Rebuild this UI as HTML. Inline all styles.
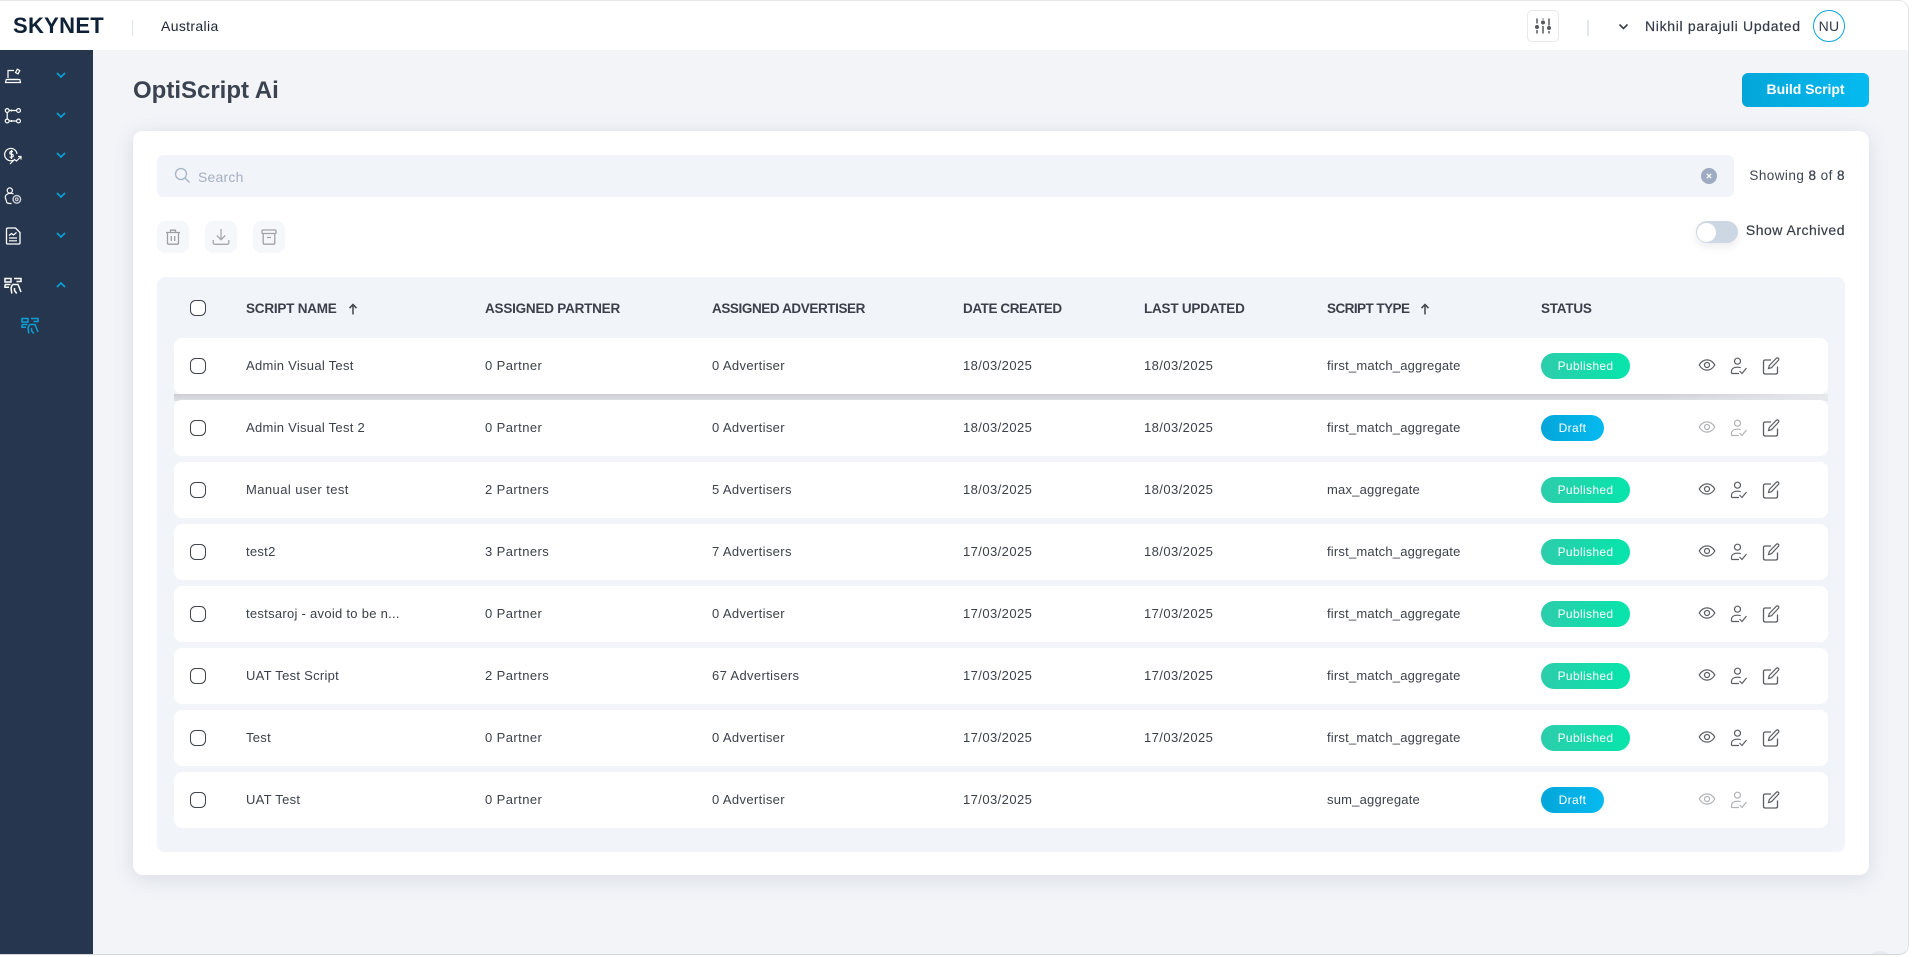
<!DOCTYPE html>
<html lang="en"><head><meta charset="utf-8"><title>OptiScript Ai</title>
<style>
html,body{margin:0;padding:0;width:1912px;height:957px;overflow:hidden;background:#fff}
*{box-sizing:border-box}
body{font-family:"Liberation Sans",sans-serif;color:#3a3f4a;position:relative}
.a{position:absolute}
.t{position:absolute;white-space:nowrap;line-height:18px;height:18px}
#win{position:absolute;left:0;top:0;width:1909px;height:955px;background:#f2f4f8;border-top:1px solid #e6e6e6;border-bottom:1px solid #d4d6d9;border-right:1px solid #dfe1e4;border-radius:0 10px 10px 0;overflow:hidden}
.row{position:absolute;left:174px;width:1654px;height:56px;background:#fff;border-radius:8px}
.row .t{top:19px;font-size:13px;letter-spacing:.42px;color:#3c404a}
.row span[style*="left:72px"]{letter-spacing:.28px}
.row span[style*="left:1153px"]{letter-spacing:.2px}
.row span[style*="left:538px"]{letter-spacing:.36px}
.cb{position:absolute;width:16px;height:16px;border:1.3px solid #3f4349;border-radius:5.5px;background:#fff}
.row .cb{left:16px;top:20px}
.th{position:absolute;top:299px;white-space:nowrap;line-height:18px;font-size:13.5px;font-weight:700;color:#3a3f4a;letter-spacing:-.22px}
.pill{position:absolute;left:1367px;top:15px;height:26px;border-radius:13px;color:#fff;font-size:12px;line-height:26px;text-align:center;letter-spacing:.35px}
.pub{width:89px;background:linear-gradient(90deg,#2ccdab,#06e5ab)}
.dr{width:63px;background:linear-gradient(90deg,#04a6d9,#05baf0)}
.ic{position:absolute;fill:none;stroke:#5a5d62;stroke-width:1.2}
.dim{stroke:#b0b2b5}
.side{position:absolute;fill:none;stroke:#fff;stroke-width:1.2}
.chev{position:absolute;left:55px;width:12px;height:8px;fill:none;stroke:#0a9fd4;stroke-width:1.8}
.ab{position:absolute;top:221px;width:32px;height:32px;background:#f6f7fb;border-radius:8px}
</style></head><body>
<svg width="0" height="0" style="position:absolute">
<defs>
<symbol id="eye" viewBox="0 0 18 14"><path d="M1.2 7C3.2 3.6 5.8 1.9 9 1.9S14.8 3.6 16.8 7C14.8 10.4 12.2 12.100 9 12.100S3.200 10.400 1.200 7Z"/><circle cx="9" cy="7" r="2.500"/></symbol>
<symbol id="usr" viewBox="0 0 18 18"><circle cx="7.500" cy="4.200" r="3"/><path d="M1.500 16.500V14.500C1.500 11.800 3.800 10.200 7.500 10.200c1.300 0 2.300.2 3.200.5M1.500 16.500H9"/><path d="M9.500 14l2.500 2.500 4.500-5.500"/></symbol>
<symbol id="edt" viewBox="0 0 18 18"><path d="M9 3H3.200C2.100 3 1.500 3.700 1.500 4.700v10.600c0 1 .6 1.700 1.700 1.700h10.600c1 0 1.700-.7 1.700-1.700V9.500" stroke-width="1.300"/><path d="M14.300 1.300c.6-.6 1.500-.6 2.100 0s.6 1.500 0 2.100L9.500 10.700l-3 .8.800-3Z"/></symbol>
<symbol id="scr" viewBox="0 0 18 18"><path d="M1 1.500h6v3.500H1zM1 7.500h5.500M1 7.500v2.800h4M10 1.500h7v3h-4.500M8.500 7.500h5.500l3 7.500M8.500 7.500l-1.500 3.500 .8 5.500M10.500 11v2.500l2.200 3"/></symbol>
</defs>
</svg>
<div id="win">
<!-- top bar -->
<div class="a" style="left:0;top:0;width:1908px;height:49px;background:#fff"></div>
<div class="t" style="left:13px;top:11px;font-size:22px;line-height:27px;height:27px;font-weight:700;color:#0f2136;letter-spacing:.3px">SKYNET</div>
<div class="a" style="left:132px;top:19px;width:1px;height:16px;background:#dfe5ec"></div>
<div class="t" style="left:161px;top:16px;font-size:14px;color:#1c2433;letter-spacing:.35px">Australia</div>
<div class="a" style="left:1527px;top:9px;width:32px;height:32px;border:1px solid #e7e8ea;border-radius:5px;background:#fff"></div>
<svg class="a" style="left:1534px;top:16px" width="18" height="18" viewBox="0 0 18 18" fill="none" stroke="#55585d" stroke-width="1.500"><path d="M3 1.500v5M3 13v3.500M9 1.500v1M9 9v7.500M15 1.500v7M15 14v2.500"/><circle cx="3" cy="10" r="2" fill="#55585d" stroke="none"/><circle cx="9" cy="5.500" r="2" fill="#55585d" stroke="none"/><circle cx="15" cy="11" r="2" fill="#55585d" stroke="none"/></svg>
<div class="a" style="left:1587px;top:19px;width:2px;height:16px;background:#e2e7ee"></div>
<svg class="a" style="left:1618px;top:22px" width="11" height="8" viewBox="0 0 11 8" fill="none" stroke="#3c4048" stroke-width="1.600"><path d="M1.500 1.500L5.500 5.500 9.500 1.500"/></svg>
<div class="t" style="left:1645px;top:16px;font-size:14px;color:#333a47;letter-spacing:.68px;-webkit-text-stroke:.2px #333a47">Nikhil parajuli Updated</div>
<div class="a" style="left:1813px;top:9px;width:32px;height:32px;border:1px solid #0ba6dc;border-radius:50%;background:#fff;text-align:center;font-size:14px;line-height:30px;color:#333a47;letter-spacing:.3px">NU</div>
<!-- sidebar -->
<div class="a" style="left:0;top:49px;width:93px;height:906px;background:#27364f"></div>
<svg class="side" style="left:4px;top:66px" width="18" height="17" viewBox="0 0 18 17"><path d="M4 11V3.500h6M1.500 15.500h15l-.7-3H2.300l-.8 3Z"/><path d="M11.500 5.500l1.800-3.300 2.500 1.400L14 6.900z"/><path d="M4 12.500h10"/></svg>
<svg class="side" style="left:4px;top:106px" width="18" height="18" viewBox="0 0 18 18"><circle cx="3.200" cy="3.500" r="1.900"/><circle cx="14.500" cy="3.500" r="1.900"/><circle cx="3.200" cy="14" r="1.900"/><circle cx="14.500" cy="14" r="1.900"/><path d="M5 3.500h7.600M5 14h7.600M3.200 5.500v6.600M7.500 2.500v2M7.500 13v2"/></svg>
<svg class="side" style="left:4px;top:146px" width="18" height="18" viewBox="0 0 18 18"><path d="M9.500 13.200A6.200 6.200 0 1 1 13 7"/><path d="M9 4.500H6.800C5.500 4.500 5.500 7.200 7 7.200s2.500.2 2.200 2c-.2 1-2 1-3.500 1M7.500 3v9"/><path d="M6 17l4.500-4.500 2 1.500 4.500-4.500M14 9.500h3v3"/></svg>
<svg class="side" style="left:4px;top:186px" width="18" height="18" viewBox="0 0 18 18"><circle cx="5.800" cy="3.500" r="2.600"/><path d="M9.500 7C7 5.800 3 6 1.500 9c-1 2 1 3.500 1 5.500 0 1.500 1 2 3.500 2h1.500"/><circle cx="12.800" cy="12.300" r="3.800" stroke-width="1.500" stroke="#c7ccd4"/><circle cx="12.800" cy="12.300" r="1.300" stroke="#c7ccd4"/></svg>
<svg class="side" style="left:5px;top:226px" width="16" height="18" viewBox="0 0 16 18"><path d="M3 1H10.500L15 5.500V16c0 .6-.5 1-1 1H2.500c-.6 0-1-.4-1-1V2.500C1.500 1.500 2 1 3 1Z" stroke-width="1.300"/><path d="M4 8.500l2.500-2 2 1.500 3-2.500M4 11h8M4 13.800h8"/></svg>
<svg class="side" style="left:4px;top:276px;stroke-width:1.500" width="18" height="18"><use href="#scr"/></svg>
<svg class="side" style="left:21px;top:316px;stroke:#0e9fd6;stroke-width:1.500" width="18" height="18"><use href="#scr"/></svg>
<svg class="chev" style="top:70px" viewBox="0 0 12 8"><path d="M2 2l4 4 4-4"/></svg>
<svg class="chev" style="top:110px" viewBox="0 0 12 8"><path d="M2 2l4 4 4-4"/></svg>
<svg class="chev" style="top:150px" viewBox="0 0 12 8"><path d="M2 2l4 4 4-4"/></svg>
<svg class="chev" style="top:190px" viewBox="0 0 12 8"><path d="M2 2l4 4 4-4"/></svg>
<svg class="chev" style="top:230px" viewBox="0 0 12 8"><path d="M2 2l4 4 4-4"/></svg>
<svg class="chev" style="top:280px" viewBox="0 0 12 8"><path d="M2 6l4-4 4 4"/></svg>
<!-- header -->
<div class="t" style="left:133px;top:75px;height:30px;line-height:30px;font-size:24px;font-weight:700;color:#3b4250;letter-spacing:0">OptiScript Ai</div>
<div class="a" style="left:1742px;top:72px;width:127px;height:34px;border-radius:6px;background:linear-gradient(90deg,#04a6d9,#05baf0);color:#fff;font-size:14px;font-weight:700;text-align:center;line-height:33px;letter-spacing:-.05px">Build Script</div>
<!-- card -->
<div class="a" style="left:133px;top:130px;width:1736px;height:744px;background:#fff;border-radius:10px;box-shadow:0 4px 20px rgba(90,100,125,.16)"></div>
<div class="a" style="left:157px;top:154px;width:1577px;height:42px;background:#f1f4f9;border-radius:6px"></div>
<svg class="a" style="left:174px;top:166px" width="17" height="17" viewBox="0 0 17 17" fill="none" stroke="#a6b4c8" stroke-width="1.300"><circle cx="7" cy="7" r="5.500"/><path d="M11 11l4.500 4.500"/></svg>
<div class="t" style="left:198px;top:167px;font-size:14px;color:#a5afc0;letter-spacing:.2px">Search</div>
<div class="a" style="left:1701px;top:167px;width:16px;height:16px;border-radius:50%;background:#9dabc3;color:#fff;text-align:center"><svg width="16" height="16" viewBox="0 0 16 16" fill="none" stroke="#fff" stroke-width="1.300" style="display:block"><path d="M5.800 5.800l4.400 4.400M10.200 5.800l-4.400 4.400"/></svg></div>
<div class="t" style="right:63px;top:166px;font-size:13.500px;color:#3f4552;letter-spacing:.45px">Showing <b style="font-weight:400;-webkit-text-stroke:.3px #3f4552">8</b> of <b style="font-weight:400;-webkit-text-stroke:.3px #3f4552">8</b></div>
<div class="ab" style="left:157px;top:220px"></div>
<div class="ab" style="left:205px;top:220px"></div>
<div class="ab" style="left:253px;top:220px"></div>
<svg class="a" style="left:165px;top:228px" width="16" height="16" viewBox="0 0 16 16" fill="none" stroke="#9c9ea2" stroke-width="1.300"><path d="M1 3.500h14M5.500 3.500V1.200h5v2.300M2.500 3.500v10.500c0 .7.500 1.200 1.200 1.200h8.600c.7 0 1.200-.5 1.200-1.200V3.500M6.300 7v5M9.700 7v5"/></svg>
<svg class="a" style="left:212px;top:227px" width="18" height="18" viewBox="0 0 18 18" fill="none" stroke="#a5a7ab" stroke-width="1.300"><path d="M9 1v10.500M4.800 7.500L9 11.700l4.200-4.200M1.200 12v2.500c0 1 .7 1.800 1.800 1.800h12c1.100 0 1.800-.8 1.800-1.800V12"/></svg>
<svg class="a" style="left:261px;top:228px" width="16" height="16" viewBox="0 0 16 16" fill="none" stroke="#a0a2a6" stroke-width="1.300"><rect x="1" y="1" width="14" height="3.500" rx="1"/><path d="M2.200 4.500v9.500c0 .7.500 1.200 1.200 1.200h9.200c.7 0 1.200-.5 1.200-1.200V4.500M6 8.500h4"/></svg>
<div class="a" style="left:1696px;top:220px;width:42px;height:22px;border-radius:11px;background:#cdd6e3;box-shadow:0 4px 8px rgba(120,130,150,.14)"></div>
<div class="a" style="left:1697px;top:222px;width:19px;height:19px;border-radius:50%;background:#fff"></div>
<div class="t" style="right:63px;top:220px;font-size:14px;color:#3a3f4a;letter-spacing:.5px;-webkit-text-stroke:.2px #3a3f4a">Show Archived</div>
<!-- table -->
<div class="a" style="left:157px;top:276px;width:1688px;height:575px;background:#f1f4f9;border-radius:8px"></div>
<div class="cb" style="left:190px;top:299px"></div>
<div class="th" style="left:246px">SCRIPT NAME</div>
<svg class="a" style="left:348px;top:302px" width="10" height="12" viewBox="0 0 10 12" fill="none" stroke="#43474e" stroke-width="1.500"><path d="M5 11.500V2M1.500 5.200L5 1.500l3.500 3.700"/></svg>
<div class="th" style="left:485px">ASSIGNED PARTNER</div>
<div class="th" style="left:712px;letter-spacing:-.41px">ASSIGNED ADVERTISER</div>
<div class="th" style="left:963px;letter-spacing:-.42px">DATE CREATED</div>
<div class="th" style="left:1144px">LAST UPDATED</div>
<div class="th" style="left:1327px;letter-spacing:-.55px">SCRIPT TYPE</div>
<svg class="a" style="left:1420px;top:302px" width="10" height="12" viewBox="0 0 10 12" fill="none" stroke="#43474e" stroke-width="1.500"><path d="M5 11.500V2M1.500 5.200L5 1.500l3.500 3.700"/></svg>
<div class="th" style="left:1541px">STATUS</div>

<div class="a" style="left:174px;top:393px;width:1654px;height:7px;background:linear-gradient(90deg,rgba(242,244,248,0) 0,rgba(242,244,248,0) 90%,#e6e8ec 100%),linear-gradient(180deg,#ccced3,#dee1e6)"></div>
<div class="row" style="top:399px"><div class="cb"></div><span class="t" style="left:72px">Admin Visual Test 2</span><span class="t" style="left:311px">0 Partner</span><span class="t" style="left:538px">0 Advertiser</span><span class="t" style="left:789px">18/03/2025</span><span class="t" style="left:970px">18/03/2025</span><span class="t" style="left:1153px">first_match_aggregate</span><div class="pill dr">Draft</div><svg class="ic dim" style="left:1524px;top:20px" width="18" height="14"><use href="#eye"/></svg><svg class="ic dim" style="left:1556px;top:19px" width="18" height="18"><use href="#usr"/></svg><svg class="ic" style="left:1588px;top:19px" width="18" height="18"><use href="#edt"/></svg></div>
<div class="row" style="top:337px"><div class="cb"></div><span class="t" style="left:72px">Admin Visual Test</span><span class="t" style="left:311px">0 Partner</span><span class="t" style="left:538px">0 Advertiser</span><span class="t" style="left:789px">18/03/2025</span><span class="t" style="left:970px">18/03/2025</span><span class="t" style="left:1153px">first_match_aggregate</span><div class="pill pub">Published</div><svg class="ic" style="left:1524px;top:20px" width="18" height="14"><use href="#eye"/></svg><svg class="ic" style="left:1556px;top:19px" width="18" height="18"><use href="#usr"/></svg><svg class="ic" style="left:1588px;top:19px" width="18" height="18"><use href="#edt"/></svg></div>
<div class="row" style="top:461px"><div class="cb"></div><span class="t" style="left:72px;letter-spacing:.42px">Manual user test</span><span class="t" style="left:311px">2 Partners</span><span class="t" style="left:538px">5 Advertisers</span><span class="t" style="left:789px">18/03/2025</span><span class="t" style="left:970px">18/03/2025</span><span class="t" style="left:1153px">max_aggregate</span><div class="pill pub">Published</div><svg class="ic" style="left:1524px;top:20px" width="18" height="14"><use href="#eye"/></svg><svg class="ic" style="left:1556px;top:19px" width="18" height="18"><use href="#usr"/></svg><svg class="ic" style="left:1588px;top:19px" width="18" height="18"><use href="#edt"/></svg></div>
<div class="row" style="top:523px"><div class="cb"></div><span class="t" style="left:72px">test2</span><span class="t" style="left:311px">3 Partners</span><span class="t" style="left:538px">7 Advertisers</span><span class="t" style="left:789px">17/03/2025</span><span class="t" style="left:970px">18/03/2025</span><span class="t" style="left:1153px">first_match_aggregate</span><div class="pill pub">Published</div><svg class="ic" style="left:1524px;top:20px" width="18" height="14"><use href="#eye"/></svg><svg class="ic" style="left:1556px;top:19px" width="18" height="18"><use href="#usr"/></svg><svg class="ic" style="left:1588px;top:19px" width="18" height="18"><use href="#edt"/></svg></div>
<div class="row" style="top:585px"><div class="cb"></div><span class="t" style="left:72px">testsaroj - avoid to be n...</span><span class="t" style="left:311px">0 Partner</span><span class="t" style="left:538px">0 Advertiser</span><span class="t" style="left:789px">17/03/2025</span><span class="t" style="left:970px">17/03/2025</span><span class="t" style="left:1153px">first_match_aggregate</span><div class="pill pub">Published</div><svg class="ic" style="left:1524px;top:20px" width="18" height="14"><use href="#eye"/></svg><svg class="ic" style="left:1556px;top:19px" width="18" height="18"><use href="#usr"/></svg><svg class="ic" style="left:1588px;top:19px" width="18" height="18"><use href="#edt"/></svg></div>
<div class="row" style="top:647px"><div class="cb"></div><span class="t" style="left:72px">UAT Test Script</span><span class="t" style="left:311px">2 Partners</span><span class="t" style="left:538px">67 Advertisers</span><span class="t" style="left:789px">17/03/2025</span><span class="t" style="left:970px">17/03/2025</span><span class="t" style="left:1153px">first_match_aggregate</span><div class="pill pub">Published</div><svg class="ic" style="left:1524px;top:20px" width="18" height="14"><use href="#eye"/></svg><svg class="ic" style="left:1556px;top:19px" width="18" height="18"><use href="#usr"/></svg><svg class="ic" style="left:1588px;top:19px" width="18" height="18"><use href="#edt"/></svg></div>
<div class="row" style="top:709px"><div class="cb"></div><span class="t" style="left:72px">Test</span><span class="t" style="left:311px">0 Partner</span><span class="t" style="left:538px">0 Advertiser</span><span class="t" style="left:789px">17/03/2025</span><span class="t" style="left:970px">17/03/2025</span><span class="t" style="left:1153px">first_match_aggregate</span><div class="pill pub">Published</div><svg class="ic" style="left:1524px;top:20px" width="18" height="14"><use href="#eye"/></svg><svg class="ic" style="left:1556px;top:19px" width="18" height="18"><use href="#usr"/></svg><svg class="ic" style="left:1588px;top:19px" width="18" height="18"><use href="#edt"/></svg></div>
<div class="row" style="top:771px"><div class="cb"></div><span class="t" style="left:72px">UAT Test</span><span class="t" style="left:311px">0 Partner</span><span class="t" style="left:538px">0 Advertiser</span><span class="t" style="left:789px">17/03/2025</span><span class="t" style="left:1153px">sum_aggregate</span><div class="pill dr">Draft</div><svg class="ic dim" style="left:1524px;top:20px" width="18" height="14"><use href="#eye"/></svg><svg class="ic dim" style="left:1556px;top:19px" width="18" height="18"><use href="#usr"/></svg><svg class="ic" style="left:1588px;top:19px" width="18" height="18"><use href="#edt"/></svg></div>
<div class="a" style="left:1868px;top:950px;width:24px;height:24px;border-radius:50%;background:#e8eaed"></div>
</div>
</body></html>
